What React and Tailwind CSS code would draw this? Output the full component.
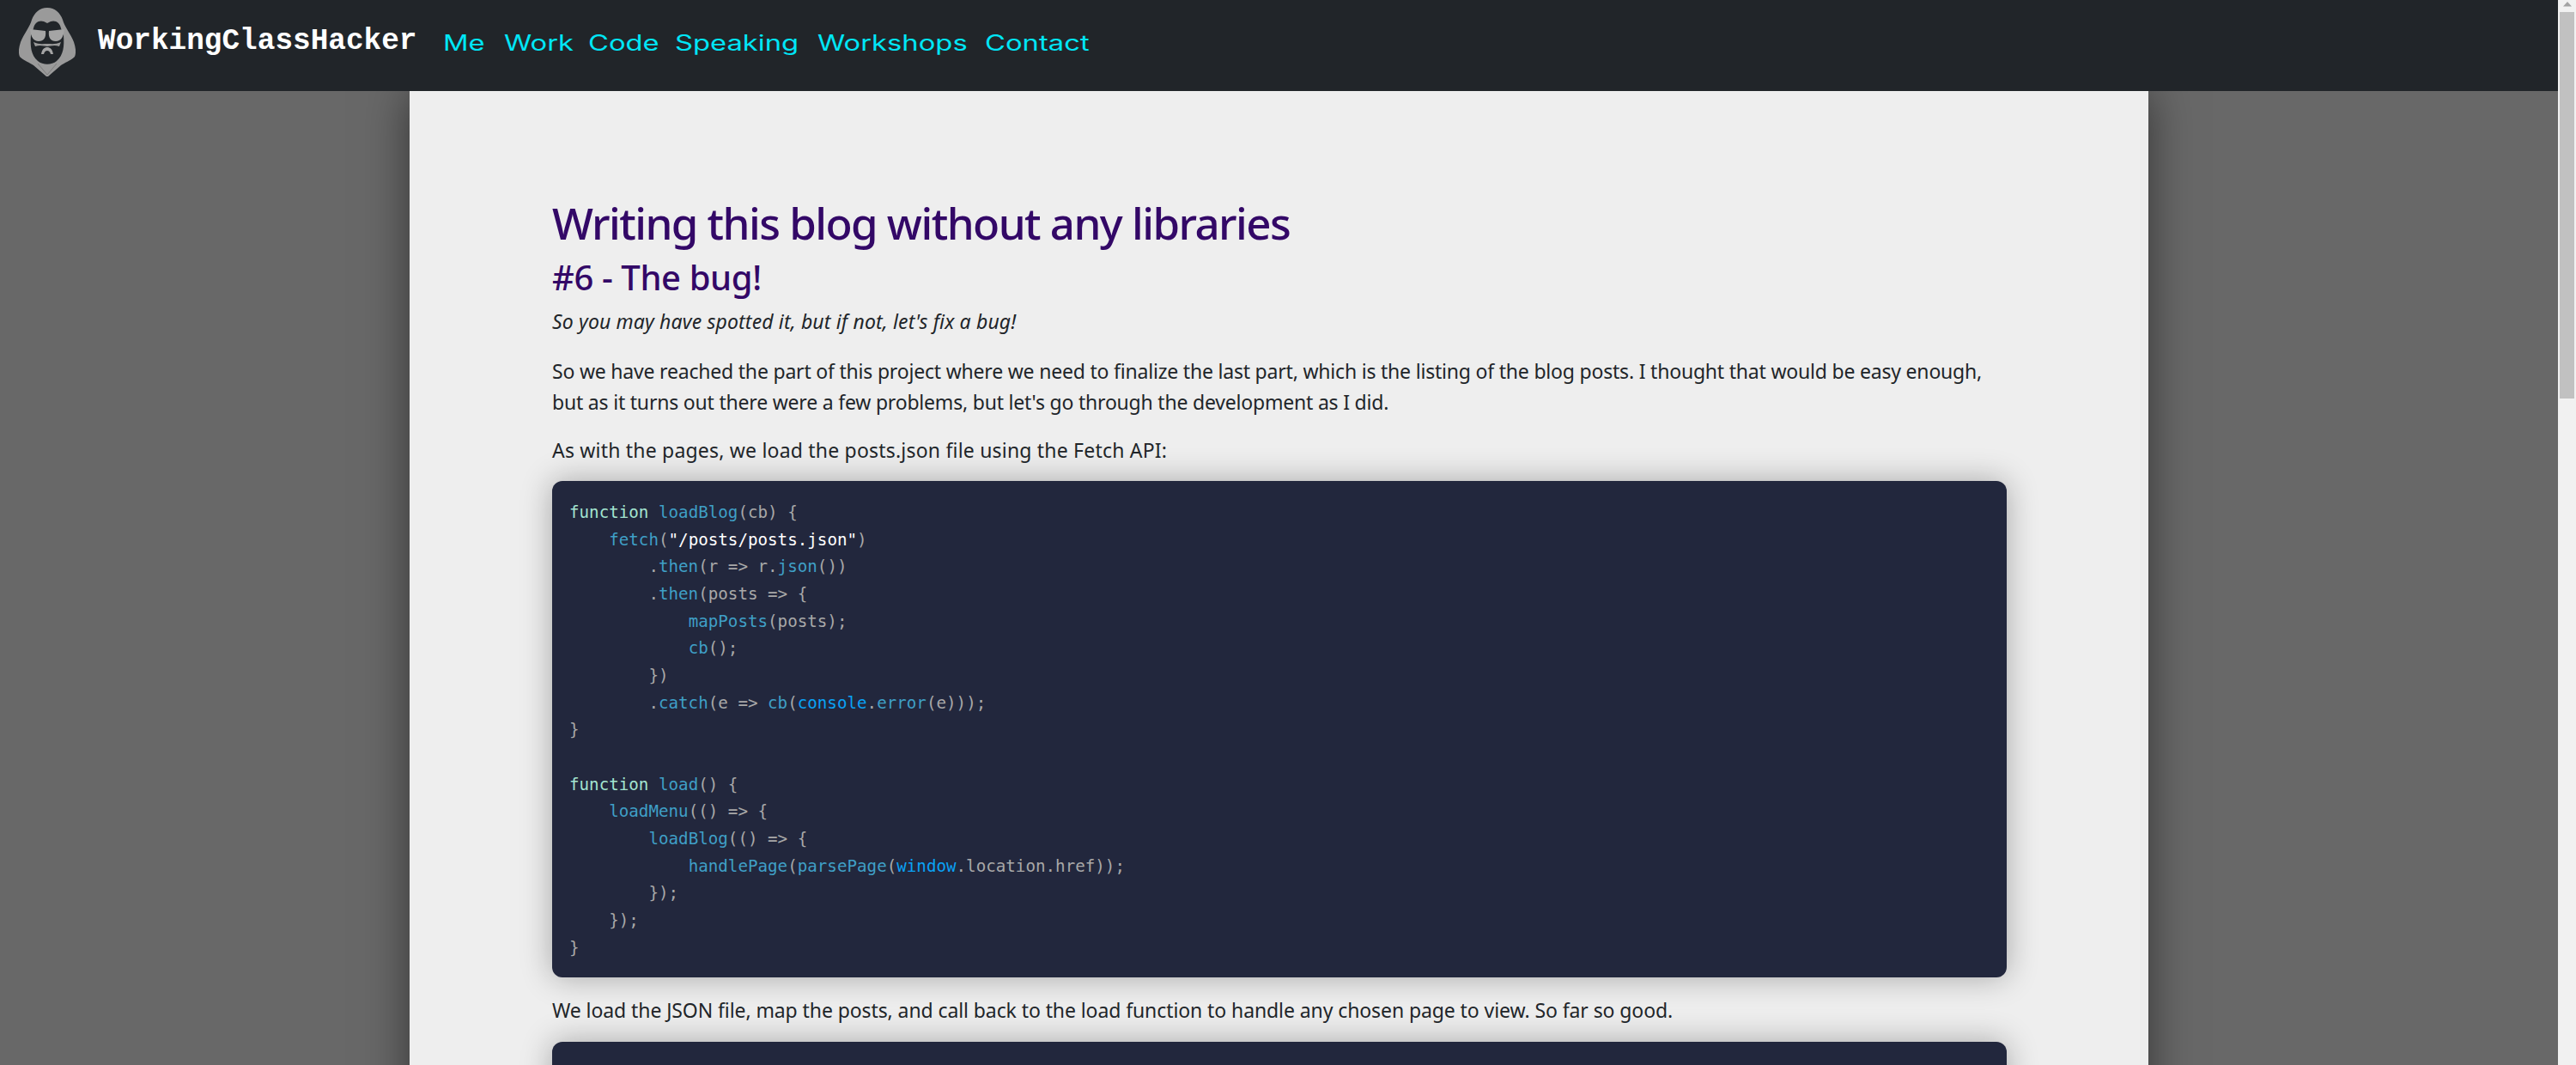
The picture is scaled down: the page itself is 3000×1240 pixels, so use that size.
import React from 'react';

const K = 'text-[#a3e4d0]';
const F = 'text-[#3f9fc6]';
const P = 'text-[#a8a8a8]';
const B = 'text-[#0aa2f5]';
const S = 'text-white';

const lines = [
  [[K, 'function'], [P, ' '], [F, 'loadBlog'], [P, '(cb) {']],
  [[P, '    '], [F, 'fetch'], [P, '('], [S, '"/posts/posts.json"'], [P, ')']],
  [[P, '        .'], [F, 'then'], [P, '(r => r.'], [F, 'json'], [P, '())']],
  [[P, '        .'], [F, 'then'], [P, '(posts => {']],
  [[P, '            '], [F, 'mapPosts'], [P, '(posts);']],
  [[P, '            '], [F, 'cb'], [P, '();']],
  [[P, '        })']],
  [[P, '        .'], [F, 'catch'], [P, '(e => '], [F, 'cb'], [P, '('], [B, 'console'], [P, '.'], [F, 'error'], [P, '(e)));']],
  [[P, '}']],
  [[P, ' ']],
  [[K, 'function'], [P, ' '], [F, 'load'], [P, '() {']],
  [[P, '    '], [F, 'loadMenu'], [P, '(() => {']],
  [[P, '        '], [F, 'loadBlog'], [P, '(() => {']],
  [[P, '            '], [F, 'handlePage'], [P, '('], [F, 'parsePage'], [P, '('], [B, 'window'], [P, '.location.href));']],
  [[P, '        });']],
  [[P, '    });']],
  [[P, '}']],
];

function Logo() {
  return (
    <svg width="66" height="80" viewBox="0 0 66 80" className="mb-[8px] shrink-0">
      <path
        d="M33 0C24 0 18 6 15 14C13 22 6 30 2 40C0 46 -1 52 1 57C6 62 13 64 17 67L32 80L34 80L49 67C53 64 60 62 65 57C67 52 66 46 64 40C60 30 53 22 51 14C48 6 42 0 33 0Z"
        fill="#9a9a9a"
      />
      <path d="M22 65L33 78L44 65" fill="none" stroke="#7c7c7c" strokeWidth="1" />
      <path d="M17 24C18 17 24 14 29 16L33 18L37 16C42 14 48 17 49 24L52 32C53 45 52 55 44 62C38 67 28 67 22 62C14 55 13 45 14 32Z" fill="#212529" />
      <path d="M13 25L31 27C32 35 29 39 23 39C17 39 14 34 13 25ZM53 25L35 27C34 35 37 39 43 39C49 39 52 34 53 25Z" fill="#a5a5a5" />
      <path d="M17 40C23 43 28 42 33 42C38 42 43 43 49 40L47 45C41 43 36 45 33 45C30 45 25 43 19 45Z" fill="#9a9a9a" />
      <path d="M26 54C27 48 30 46 33 46C36 46 39 48 40 54L37 54C36 51 35 50 33 50C31 50 30 51 29 54Z" fill="#a5a5a5" />
    </svg>
  );
}

export default function App() {
  const menu = [
    { label: 'Me', cls: 'w-[50px]' },
    { label: 'Work', cls: 'w-[77px]' },
    { label: 'Code', cls: 'w-[80px]' },
    { label: 'Speaking', cls: 'w-[145px]' },
    { label: 'Workshops', cls: 'w-[174px]' },
    { label: 'Contact', cls: 'w-[118px]' },
  ];

  return (
    <div className="flex h-[1240px] overflow-hidden bg-[#686868] font-['Noto_Sans',sans-serif]">
      <div className="flex min-w-0 flex-1 flex-col">
        {/* Navbar */}
        <nav className="relative z-10 flex h-[106px] shrink-0 items-center bg-[#212529] pl-[22px]">
          <Logo />
          <span className="mb-[10px] ml-[26px] w-[402px] font-['Liberation_Mono',monospace] text-[34.4px] font-bold text-white">
            WorkingClassHacker
          </span>
          <div className="mb-[4px] flex gap-[21px]">
            {menu.map((item) => (
              <a
                key={item.label}
                className={`${item.cls} origin-left scale-x-[1.31] whitespace-nowrap font-['Inter',sans-serif] text-[25px] font-normal text-[#00e6f6]`}
              >
                {item.label}
              </a>
            ))}
          </div>
        </nav>

        {/* Card */}
        <main className="ml-[477px] h-full w-[2025px] bg-[#eeeeee] pl-[166px] pr-[165px] pt-[122px] shadow-[0_0_50px_rgba(0,0,0,0.5)]">
          <h1 className="text-[51px] font-medium leading-[62px] tracking-[-1.55px] text-[#330867]">Writing this blog without any libraries</h1>
          <h2 className="mt-[3px] text-[40px] font-medium leading-[60px] tracking-[-0.4px] text-[#330867]">#6 - The bug!</h2>
          <p className="mt-[3px] text-[23px] italic leading-[36px] tracking-[0.15px] text-[#212529]">
            So you may have spotted it, but if not, let's fix a bug!
          </p>
          <p className="mt-[22px] whitespace-nowrap text-[23px] leading-[36px] tracking-[-0.2px] text-[#212529]">
            So we have reached the part of this project where we need to finalize the last part, which is the listing of the blog posts. I thought that would be easy enough,
            <br />
            <span className="tracking-[-0.2px]">but as it turns out there were a few problems, but let's go through the development as I did.</span>
          </p>
          <p className="mt-[20px] text-[23px] leading-[36px] tracking-[0.2px] text-[#212529]">
            As with the pages, we load the posts.json file using the Fetch API:
          </p>
          <pre className="mt-[18px] h-[578px] rounded-xl bg-[#22273d] px-[20px] pt-[21px] font-['DejaVu_Sans_Mono',monospace] text-[19.2px] leading-[31.67px] shadow-[0_0_36px_rgba(0,0,0,0.3)]">
            {lines.map((line, i) => (
              <div key={i}>
                {line.map(([cls, text], j) => (
                  <span key={j} className={cls}>{text}</span>
                ))}
              </div>
            ))}
          </pre>
          <p className="mt-[20px] text-[23px] leading-[36px] tracking-[-0.09px] text-[#212529]">
            We load the JSON file, map the posts, and call back to the load function to handle any chosen page to view. So far so good.
          </p>
          <div className="mt-[19px] h-[300px] rounded-xl bg-[#22273d] shadow-[0_0_36px_rgba(0,0,0,0.3)]" />
        </main>
      </div>

      {/* Scrollbar */}
      <div className="flex w-[21px] shrink-0 flex-col items-center bg-[#f1f1f1]">
        <svg width="10" height="6" viewBox="0 0 10 6" className="mt-[2px]">
          <path d="M5 0L10 5.5H0Z" fill="#a3a3a3" />
        </svg>
        <div className="mt-[6px] h-[450px] w-[17px] bg-[#c1c1c1]" />
      </div>
    </div>
  );
}
